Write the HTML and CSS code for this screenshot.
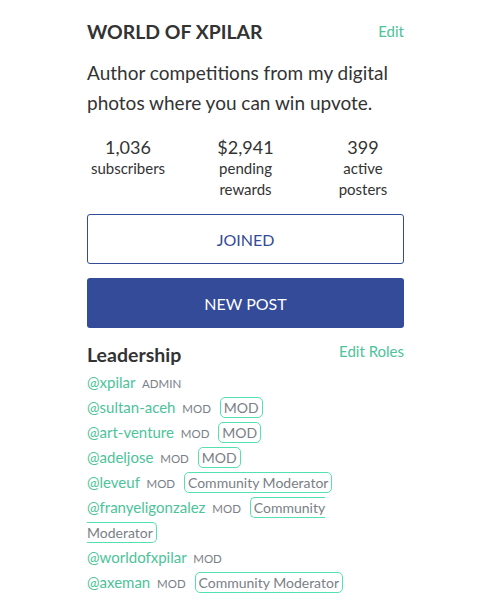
FILE: index.html
```html
<!DOCTYPE html>
<html>
<head>
<meta charset="utf-8">
<link rel="stylesheet" href="styles.css">
</head>
<body>
<div class="card">
  <div class="head">
    <h1 class="title">WORLD OF XPILAR</h1>
    <a class="link edit">Edit</a>
  </div>
  <p class="about">Author competitions from my digital photos where you can win upvote.</p>
  <div class="stats">
    <div class="stat"><div class="num">1,036</div><div class="lbl">subscribers</div></div>
    <div class="stat"><div class="num">$2,941</div><div class="lbl">pending<br>rewards</div></div>
    <div class="stat"><div class="num">399</div><div class="lbl">active<br>posters</div></div>
  </div>
  <div class="btn joined">JOINED</div>
  <div class="btn newpost">NEW POST</div>
  <div class="head lead-head">
    <h2 class="lead">Leadership</h2>
    <a class="link roles">Edit Roles</a>
  </div>
  <div class="team">
    <div class="row"><a class="user">@xpilar</a> <span class="role">ADMIN</span></div>
    <div class="row"><a class="user">@sultan-aceh</a> <span class="role">MOD</span> <span class="tag">MOD</span></div>
    <div class="row"><a class="user">@art-venture</a> <span class="role">MOD</span> <span class="tag">MOD</span></div>
    <div class="row"><a class="user">@adeljose</a> <span class="role">MOD</span> <span class="tag">MOD</span></div>
    <div class="row"><a class="user">@leveuf</a> <span class="role">MOD</span> <span class="tag">Community Moderator</span></div>
    <div class="row"><a class="user">@franyeligonzalez</a> <span class="role">MOD</span> <span class="tag">Community Moderator</span></div>
    <div class="row"><a class="user">@worldofxpilar</a> <span class="role">MOD</span></div>
    <div class="row"><a class="user">@axeman</a> <span class="role">MOD</span> <span class="tag">Community Moderator</span></div>
  </div>
</div>
</body>
</html>
```
FILE: styles.css
```css
body {
  margin: 0;
  background: #fff;
  font-family: "Source Sans Pro", "Lato", "Liberation Sans", sans-serif;
  color: #333;
}
.card {
  width: 317px;
  margin-left: 87px;
  padding-top: 20px;
}
.head {
  display: flex;
  justify-content: space-between;
  align-items: flex-start;
}
.title {
  margin: 0;
  font-size: 19.4px;
  font-weight: 700;
  line-height: 24px;
  color: #333;
}
.link {
  color: #4dc39a;
  font-size: 15px;
  line-height: 22px;
}
.about {
  margin: 14px 0 0;
  font-size: 19px;
  line-height: 30px;
  color: #333;
}
.stats {
  display: flex;
  justify-content: space-between;
  margin-top: 18px;
}
.stat {
  width: 82px;
  text-align: center;
}
.num {
  font-size: 18px;
  line-height: 22px;
}
.lbl {
  font-size: 15px;
  line-height: 21px;
}
.btn {
  height: 48px;
  border-radius: 3px;
  display: flex;
  align-items: center;
  justify-content: center;
  font-size: 16px;
}
.joined {
  margin-top: 14px;
  border: 1px solid #334b99;
  color: #334b99;
}
.newpost {
  margin-top: 14px;
  height: 50px;
  background: #334b99;
  color: #fff;
}
.lead-head {
  margin-top: 14px;
}
.lead {
  margin: 0;
  font-size: 19.5px;
  font-weight: 700;
  line-height: 26px;
  color: #333;
}
.roles {
  margin-top: -2px;
}
.team {
  margin-top: 2px;
  width: 305px;
}
.row {
  font-size: 15px;
  line-height: 25px;
}
.user {
  color: #4dc39a;
}
.role {
  font-size: 11.5px;
  line-height: 1;
  color: #7b8086;
  margin-left: 3px;
  margin-right: 5px;
}
.tag {
  font-size: 14px;
  line-height: 18px;
  color: #7b8086;
  border: 1px solid #55e0b2;
  border-radius: 5px;
  padding: 1px 3px;
}
```
